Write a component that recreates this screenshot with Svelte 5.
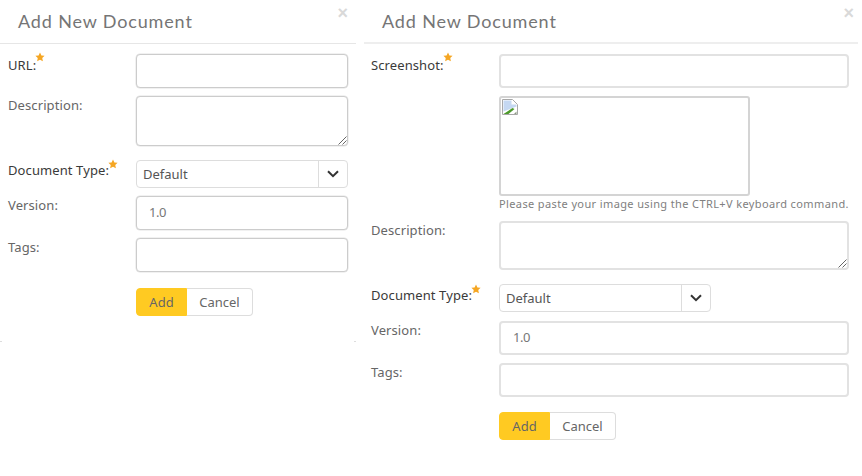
<script>
  const docTypes = ['Default'];
</script>

{#snippet star()}
  <svg class="star" viewBox="0 0 24 24" width="10" height="10"><path d="M12 1l3.4 7.2 7.6 1-5.6 5.3 1.5 7.8L12 18.4l-6.9 3.9 1.5-7.8L1 9.2l7.6-1z" /></svg>
{/snippet}

{#snippet selectBox()}
  <div class="select">
    <span class="value">{docTypes[0]}</span>
    <span class="caret">
      <svg viewBox="0 0 14 10" width="14" height="10"><path d="M2 2.2l5 5 5-5" /></svg>
    </span>
  </div>
{/snippet}

{#snippet buttons()}
  <div class="row actions">
    <span></span>
    <div class="btn-group">
      <button class="add">Add</button>
      <button class="cancel">Cancel</button>
    </div>
  </div>
{/snippet}

{#snippet tail()}
  <div class="row typerow">
    <span class="label dark">Document Type:{@render star()}</span>
    {@render selectBox()}
  </div>
  <div class="row">
    <span class="label">Version:</span>
    <div class="input version">1.0</div>
  </div>
  <div class="row">
    <span class="label">Tags:</span>
    <div class="input"></div>
  </div>
  {@render buttons()}
{/snippet}

{#snippet textarea()}
  <div class="input area">
    <svg class="grip" viewBox="0 0 10 10" width="10" height="10"><path d="M9.5 1.5l-8 8M9.5 5.5l-4 4" /></svg>
  </div>
{/snippet}

<div class="page">
  <section class="dialog left">
    <header><h2>Add New Document</h2><span class="close">×</span></header>
    <div class="form">
      <div class="row first">
        <span class="label dark">URL:{@render star()}</span>
        <div class="input"></div>
      </div>
      <div class="row descrow">
        <span class="label">Description:</span>
        {@render textarea()}
      </div>
      {@render tail()}
    </div>
  </section>

  <section class="dialog right">
    <header><h2>Add New Document</h2><span class="close">×</span></header>
    <div class="form">
      <div class="row first">
        <span class="label dark">Screenshot:{@render star()}</span>
        <div class="input"></div>
      </div>
      <div class="row shot">
        <span></span>
        <div>
          <div class="paste">
            <svg class="broken" viewBox="0 0 16 16" width="16" height="16">
              <path d="M.5.5h10l5 5v10H.5z" fill="#fff" stroke="#a8a8a8" />
              <path d="M1.500 1.500h8v4h5v2l-13 5z" fill="#c5d8f2" />
              <path d="M1.500 15l9-6 2 1-6 5z" fill="#4c9a2a" />
              <path d="M12 15l2.500-2.500V15z" fill="#8a9a80" />
            </svg>
          </div>
          <div class="hint">Please paste your image using the CTRL+V keyboard command.</div>
        </div>
      </div>
      <div class="row descrow">
        <span class="label">Description:</span>
        {@render textarea()}
      </div>
      {@render tail()}
    </div>
  </section>
</div>

<style>
  :global(body) {
    background: #fff;
  }

  .page {
    display: flex;
    width: 862px;
    height: 476px;
    align-items: flex-start;
    font-family: "Noto Sans", "Open Sans", sans-serif;
    font-size: 13px;
    color: #666;
    overflow: hidden;
  }

  .dialog {
    flex: none;
    background: #fff;
  }

  .left {
    position: relative;
    width: 356px;
    height: 342px;
    margin-right: 8px;
  }

  /* faint rounded corners left at the bottom of the dialog */
  .left::before,
  .left::after {
    content: "";
    position: absolute;
    bottom: 0;
    width: 2px;
    height: 1px;
    background: #ddd;
  }

  .left::before {
    left: 0;
  }

  .left::after {
    right: 0;
  }

  .right {
    width: 494px;
  }

  header {
    display: flex;
    justify-content: space-between;
    height: 43px;
    border-bottom: 1px solid #e6e6e6;
  }

  .right header {
    height: 42px;
    border-bottom: 2px solid #eee;
  }

  h2 {
    margin: 10px 0 0 18px;
    font-family: Lato, sans-serif;
    font-size: 18px;
    line-height: 22px;
    font-weight: 400;
    letter-spacing: 0.85px;
    color: #757575;
  }

  .close {
    margin: 4px 8px 0 0;
    font-family: "Liberation Sans", sans-serif;
    font-size: 18px;
    line-height: 18px;
    font-weight: 700;
    color: #d9d9d9;
  }

  .right .close {
    margin-right: 4px;
  }

  .form {
    display: flex;
    flex-direction: column;
    gap: 8px;
    padding: 10px 8px 0 8px;
  }

  .right .form {
    padding: 10px 9px 0 7px;
  }

  .row {
    display: grid;
    grid-template-columns: 128px 1fr;
  }

  .label {
    line-height: 18px;
    letter-spacing: 0.1px;
    white-space: nowrap;
  }

  .dark {
    color: #3a3a3a;
  }

  .first .label {
    padding-top: 2px;
  }

  .typerow .label {
    padding-top: 1px;
  }

  .right .typerow .label {
    padding-top: 2px;
  }

  .star {
    position: relative;
    top: -6px;
    margin-left: -1px;
    fill: #f5a623;
  }

  .first .star {
    top: -8px;
  }

  .input {
    position: relative;
    box-sizing: border-box;
    height: 34px;
    padding: 0 12px;
    line-height: 31px;
    background: #fff;
    border: 1px solid #ccc;
    border-radius: 4px;
    box-shadow: 0 0 0 0.5px #e4e4e4;
  }

  .right .input {
    border-color: #e2e2e2;
    border-width: 2px;
    line-height: 29px;
    box-shadow: none;
  }

  .input.area {
    height: 50px;
  }

  .right .input.area {
    height: 49px;
  }

  .grip {
    position: absolute;
    right: 0;
    bottom: 0;
    fill: none;
    stroke: #555;
    stroke-width: 0.9;
  }

  .version {
    color: #777;
    letter-spacing: -0.4px;
  }

  .typerow {
    margin-top: 6px;
  }

  .right .typerow {
    margin-bottom: 1px;
  }

  .select {
    display: flex;
    align-items: center;
    box-sizing: border-box;
    width: 212px;
    height: 28px;
    background: #fff;
    border: 1px solid #ddd;
    border-radius: 4px;
    color: #555;
  }

  .value {
    flex: 1;
    padding-left: 6px;
    line-height: 26px;
  }

  .caret {
    display: flex;
    align-items: center;
    justify-content: center;
    width: 28px;
    height: 100%;
    border-left: 1px solid #ddd;
  }

  .caret path {
    fill: none;
    stroke: #333;
    stroke-width: 2;
  }

  .actions {
    margin-top: 8px;
  }

  .right .actions {
    margin-top: 7px;
  }

  .btn-group {
    display: flex;
    height: 28px;
  }

  button {
    box-sizing: border-box;
    height: 28px;
    padding: 0;
    font: inherit;
    color: #666;
    border: 1px solid #ddd;
    background: #fff;
  }

  .add {
    width: 51px;
    background: #ffca22;
    border-color: #ffca22;
    border-radius: 4px 0 0 4px;
  }

  .cancel {
    width: 66px;
    border-left: 0;
    border-radius: 0 4px 4px 0;
  }

  .shot > div {
    min-width: 0;
  }

  .paste {
    box-sizing: border-box;
    width: 251px;
    height: 100px;
    padding: 1px;
    border: 2px solid #d4d4d4;
    border-radius: 3px;
  }

  .broken {
    display: block;
  }

  .hint {
    font-size: 11px;
    line-height: 16px;
    margin-bottom: 1px;
    letter-spacing: 0.38px;
    color: #808080;
    white-space: nowrap;
  }
</style>
